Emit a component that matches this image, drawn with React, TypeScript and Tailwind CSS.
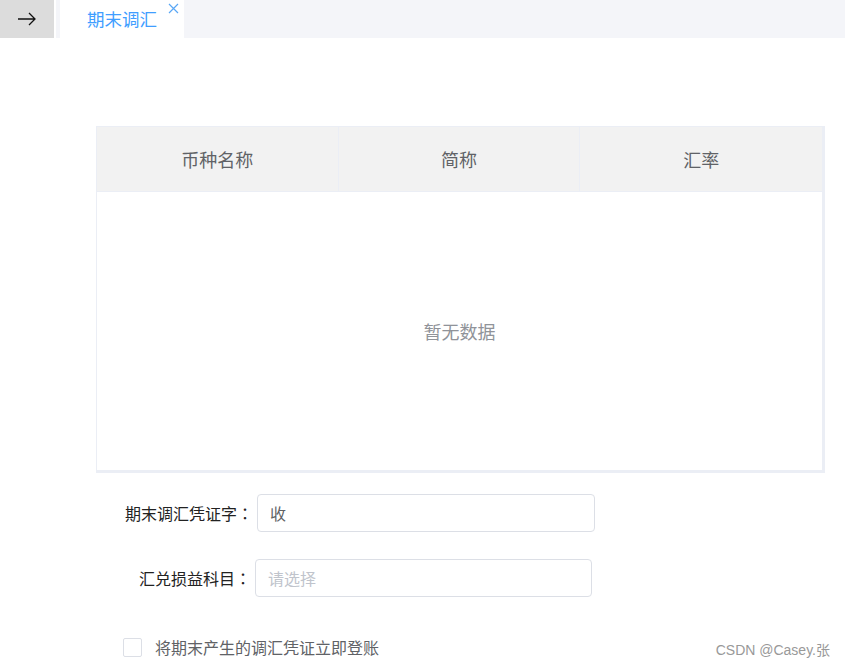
import React from 'react';

const font = { fontFamily: '"Noto Sans CJK SC", "Microsoft YaHei", sans-serif' };
const colon = { fontFamily: '"Noto Sans CJK TC", sans-serif' };

const App: React.FC = () => {
  const columns = ['币种名称', '简称', '汇率'];

  return (
    <div className="relative w-[845px] h-[670px] bg-white overflow-hidden" style={font}>
      {/* tab bar */}
      <div className="flex h-[38px] bg-[#f4f5f9]">
        <div className="flex w-[54px] items-center justify-center bg-[#dcdcdc]">
          <svg width="20" height="14" viewBox="0 0 20 14" fill="none" stroke="#111" strokeWidth="1.3">
            <path d="M1 7h17M12 1l6 6-6 6" />
          </svg>
        </div>
        <div className="w-[2px] bg-white" />
        <div className="ml-[4px] relative flex w-[124px] items-center bg-white pl-[27px]">
          <span className="text-[17.5px] text-[#409eff] leading-none">期末调汇</span>
          <svg className="absolute left-[108px] top-[3px]" width="11" height="11" viewBox="0 0 11 11" stroke="#5aa7f5" strokeWidth="1.2">
            <path d="M1 1l9 9M10 1l-9 9" />
          </svg>
        </div>
      </div>

      {/* table */}
      <div className="ml-[96px] mt-[88px] w-[729px] border-t border-l border-[#ebeef5] border-r-[3px] border-b-[3px]">
        <div className="grid grid-cols-3 h-[65px] bg-[#f2f2f2] border-b border-[#ebeef5]">
          {columns.map((c, i) => (
            <div
              key={c}
              className={`flex items-center justify-center text-[18px] text-[#606266] ${i < 2 ? 'border-r border-[#ebeef5]' : ''}`}
            >
              {c}
            </div>
          ))}
        </div>
        <div className="flex h-[278px] items-center justify-center text-[18px] text-[#909399]">暂无数据</div>
      </div>

      {/* form */}
      <div className="ml-[96px] mt-[21px] flex items-center">
        <label className="w-[161px] pr-[4px] text-right text-[16px] text-[#222]">
          期末调汇凭证字<span style={colon}>：</span>
        </label>
        <div className="flex h-[38px] w-[338px] items-center rounded-[4px] border border-[#dcdfe6] px-[12px] text-[16px] text-[#606266]">
          收
        </div>
      </div>
      <div className="ml-[96px] mt-[27px] flex items-center">
        <label className="w-[159px] pr-[4px] text-right text-[16px] text-[#222]">
          汇兑损益科目<span style={colon}>：</span>
        </label>
        <div className="flex h-[38px] w-[337px] items-center rounded-[4px] border border-[#dcdfe6] px-[12px] text-[16px] text-[#c0c4cc]">
          请选择
        </div>
      </div>
      <div className="ml-[123px] mt-[38px] flex items-center">
        <div className="h-[19px] w-[19px] rounded-[2px] border border-[#dcdfe6] bg-white" />
        <span className="ml-[13px] text-[16px] text-[#606266]">将期末产生的调汇凭证立即登账</span>
      </div>

      <div
        className="absolute right-[15px] bottom-[9px] text-[14px] text-[#999]"
        style={{ fontFamily: '"Liberation Sans", "Noto Sans CJK SC", sans-serif' }}
      >
        CSDN @Casey.张
      </div>
    </div>
  );
};

export default App;
